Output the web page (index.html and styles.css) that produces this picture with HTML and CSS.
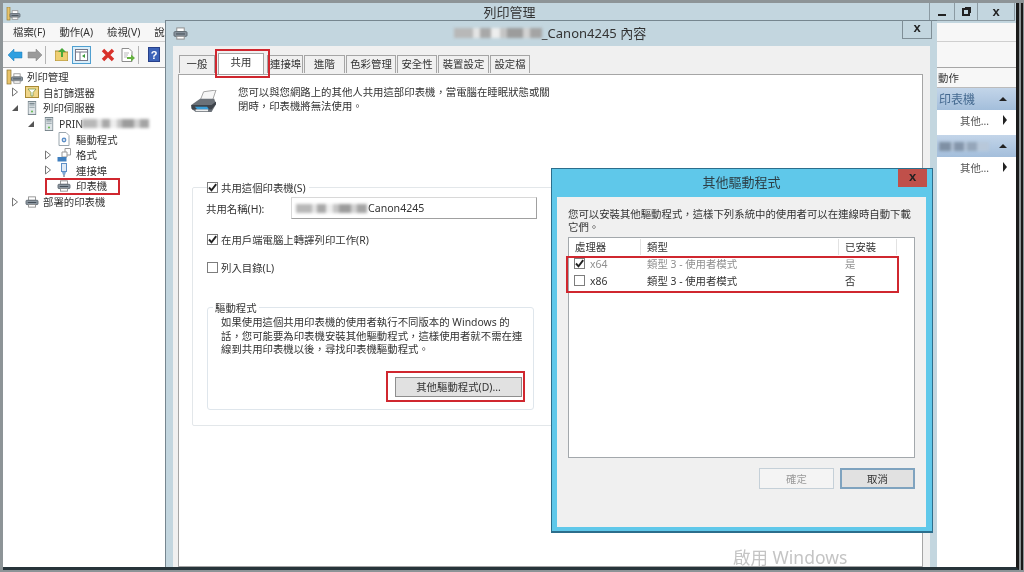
FILE: index.html
```html
<!DOCTYPE html>
<html lang="zh-Hant">
<head>
<meta charset="utf-8">
<title>列印管理</title>
<link rel="stylesheet" href="styles.css">
</head>
<body>
<svg class="defs" width="0" height="0" aria-hidden="true">
  <defs>
    <symbol id="printer" viewBox="0 0 16 14">
      <rect x="4" y="1" width="8" height="4" fill="#fff" stroke="#8a8a8a"/>
      <rect x="1" y="5" width="14" height="5" rx="1" fill="#8d98a2" stroke="#59636c"/>
      <rect x="3" y="7" width="10" height="1" fill="#39424a"/>
      <rect x="4" y="10" width="8" height="3" fill="#fff" stroke="#8a8a8a"/>
    </symbol>
    <symbol id="server" viewBox="0 0 10 16">
      <rect x=".5" y=".5" width="9" height="15" fill="#dfe5e8" stroke="#6d7b82"/>
      <rect x="2" y="2" width="6" height="2" fill="#7d8b92"/>
      <rect x="2" y="5" width="6" height="1" fill="#9aa7ad"/>
      <rect x="2" y="7" width="6" height="1" fill="#9aa7ad"/>
      <circle cx="5" cy="12" r="1.2" fill="#66bb55"/>
    </symbol>
    <symbol id="arrow-open" viewBox="0 0 8 8"><path d="M7 1V7H1Z" fill="#555"/></symbol>
    <symbol id="arrow-closed" viewBox="0 0 8 10"><path d="M1.5 1L6.5 5L1.5 9Z" fill="#fff" stroke="#777"/></symbol>
    <symbol id="check" viewBox="0 0 11 11"><path d="M2 5.500L4.500 8.300L9.200 2.200" fill="none" stroke="#222" stroke-width="1.9"/></symbol>
  </defs>
</svg>

<div class="desktop">
  <div class="main">
    <div class="main-title">
      <svg class="main-icon" width="15" height="14" viewBox="0 0 15 14"><rect x="1" y="0" width="3" height="13" fill="#e9c46a" stroke="#8a7330" stroke-width=".6"/><use href="#printer" x="3" y="3" width="12" height="10"/></svg>
      <span>列印管理</span>
      <div class="win-btns">
        <span class="win-btn min"><i></i></span>
        <span class="win-btn restore"><i></i></span>
        <span class="win-btn close">x</span>
      </div>
    </div>
    <div class="menubar">
      <span>檔案(F)</span><span>動作(A)</span><span>檢視(V)</span><span>說明(H)</span>
    </div>
    <div class="toolbar">
      <svg class="tool" width="15" height="12" viewBox="0 0 15 12"><path d="M0 6L6 0V3H14V9H6V12Z" fill="#2f9fe0" stroke="#1f78b4" stroke-width=".5"/></svg>
      <svg class="tool" width="15" height="12" viewBox="0 0 15 12"><path d="M15 6L9 0V3H1V9H9V12Z" fill="#9a9a9a" stroke="#808080" stroke-width=".5"/></svg>
      <i class="tool-sep"></i>
      <svg class="tool t-up" width="13" height="13" viewBox="0 0 13 13"><path d="M0 3H5L6 4H13V13H0Z" fill="#efcf72" stroke="#a98a35"/><path d="M6 9V4H3L7 0L11 4H8V9Z" fill="#4aa83a"/></svg>
      <svg class="tool t-pane" width="19" height="18" viewBox="0 0 19 18"><rect x=".5" y=".5" width="18" height="17" fill="#d9eefa" stroke="#4f9fd0"/><rect x="3.500" y="3.500" width="12" height="11" fill="#fff" stroke="#778"/><path d="M3 6H16" stroke="#778"/><path d="M8 6V15" stroke="#778"/><path d="M10 10L13 8V12Z" fill="#3a9a3a"/></svg>
      <svg class="tool t-x" width="14" height="14" viewBox="0 0 14 14"><path d="M2 2L12 12M12 2L2 12" stroke="#d8312a" stroke-width="3.400"/></svg>
      <svg class="tool t-exp" width="14" height="14" viewBox="0 0 14 14"><path d="M1 .5H8L11 3.500V13.500H1Z" fill="#fff" stroke="#8d8d8d"/><path d="M3 5H8M3 7H7M3 9H6" stroke="#b9b9b9"/><path d="M6 9H10V6.500L14 10L10 13.500V11H6Z" fill="#64b13f"/></svg>
      <i class="tool-sep"></i>
      <svg class="tool t-help" width="12" height="15" viewBox="0 0 12 15"><rect x=".5" y=".5" width="11" height="14" fill="#3d63b8" stroke="#27408a"/><text x="6" y="12" font-size="11" font-weight="700" text-anchor="middle" fill="#fff" font-family="Liberation Sans">?</text></svg>
    </div>
    <div class="workspace">
      <nav class="tree">
        <div class="node lv0">
          <svg class="n-icon wide" width="18" height="16" viewBox="0 0 18 16"><rect x="1" y="1" width="4" height="14" fill="#e9c46a" stroke="#8a7330" stroke-width=".7"/><use href="#printer" x="4" y="4" width="14" height="11"/></svg>
          <span>列印管理</span>
        </div>
        <div class="node lv1">
          <svg class="arrow" width="8" height="10"><use href="#arrow-closed"/></svg>
          <svg class="n-icon" width="14" height="12" viewBox="0 0 14 12"><rect x=".5" y=".5" width="13" height="11" fill="#f0d68a" stroke="#a98a35"/><path d="M3 3H11L8 6.500V10H6V6.500Z" fill="#fff" stroke="#6f8f3a" stroke-width=".7"/></svg>
          <span>自訂篩選器</span>
        </div>
        <div class="node lv1">
          <svg class="arrow" width="8" height="8"><use href="#arrow-open"/></svg>
          <svg class="n-icon" width="14" height="14" viewBox="-2 0 14 16"><use href="#server" width="10" height="16"/></svg>
          <span>列印伺服器</span>
        </div>
        <div class="node lv2">
          <svg class="arrow" width="8" height="8"><use href="#arrow-open"/></svg>
          <svg class="n-icon" width="14" height="14" viewBox="-2 0 14 16"><use href="#server" width="10" height="16"/></svg>
          <span>PRIN</span><span class="smudge s-tree"></span>
        </div>
        <div class="node lv3 noarrow">
          <svg class="n-icon" width="14" height="14" viewBox="0 0 14 14"><path d="M2 .5H9L12 3.500V13.500H2Z" fill="#fff" stroke="#9aa6ae"/><circle cx="7" cy="8" r="2.400" fill="#5d8fc7"/><circle cx="7" cy="8" r=".9" fill="#fff"/></svg>
          <span>驅動程式</span>
        </div>
        <div class="node lv3">
          <svg class="arrow" width="8" height="10"><use href="#arrow-closed"/></svg>
          <svg class="n-icon" width="14" height="14" viewBox="0 0 14 14"><path d="M8 .5H13.500V7H8Z" fill="#fff" stroke="#999"/><path d="M5 4H10V9H5Z" fill="#fff" stroke="#999"/><path d="M.5 9H9.500V13.500H.5Z" fill="#3f7fbf"/></svg>
          <span>格式</span>
        </div>
        <div class="node lv3">
          <svg class="arrow" width="8" height="10"><use href="#arrow-closed"/></svg>
          <svg class="n-icon" width="14" height="14" viewBox="0 0 14 14"><rect x="4.500" y=".5" width="5" height="8" fill="#dfeaf6" stroke="#5d8fc7"/><path d="M5 9H9L8 12H6Z" fill="#7fa8d4"/><path d="M7 12V14" stroke="#556"/></svg>
          <span>連接埠</span>
        </div>
        <div class="node lv3 noarrow">
          <svg class="n-icon" width="14" height="14"><use href="#printer" width="14" height="12" y="1"/></svg>
          <span>印表機</span>
        </div>
        <div class="node lv1">
          <svg class="arrow" width="8" height="10"><use href="#arrow-closed"/></svg>
          <svg class="n-icon" width="14" height="14"><use href="#printer" width="14" height="12" y="1"/></svg>
          <span>部署的印表機</span>
        </div>
      </nav>
      <div class="center"></div>
      <aside class="actions">
        <div class="act-head">動作</div>
        <div class="act-group"><span>印表機</span><b class="up"></b></div>
        <div class="act-item"><span>其他...</span><b class="right"></b></div>
        <div class="act-group"><span class="smudge s-act"></span><b class="up"></b></div>
        <div class="act-item"><span>其他...</span><b class="right"></b></div>
      </aside>
    </div>
  </div>

  <section class="props">
    <header class="props-title">
      <svg class="props-icon" width="15" height="13"><use href="#printer" width="15" height="13"/></svg>
      <span class="smudge s-title"></span><span>_Canon4245 內容</span>
      <span class="props-close">x</span>
    </header>
    <div class="props-client">
      <div class="tabs">
        <span class="tab t1">一般</span>
        <span class="tab t2 active">共用</span>
        <span class="tab t3">連接埠</span>
        <span class="tab t4">進階</span>
        <span class="tab t5">色彩管理</span>
        <span class="tab t6">安全性</span>
        <span class="tab t7">裝置設定</span>
        <span class="tab t8">設定檔</span>
      </div>
      <div class="panel">
        <div class="intro">
          <svg class="intro-icon" width="29" height="23" viewBox="0 0 32 26"><path d="M11 12L15 2L29 0L25 12Z" fill="#f6f6f6" stroke="#9a9a9a"/><path d="M1 17L11 10L27 10L29 16L24 25L6 25L1 21Z" fill="#6b7178"/><path d="M1 17L24 17L29 13L29 16L24 22L2 22Z" fill="#3e444b"/><path d="M5 19L19 19L21 22L8 22Z" fill="#3a9ed8"/><path d="M6 22H20V24H6Z" fill="#eee"/></svg>
          <p>您可以與您網路上的其他人共用這部印表機，當電腦在睡眠狀態或關<br>閉時，印表機將無法使用。</p>
        </div>
        <fieldset class="share">
          <legend class="check-row"><span class="cb on"><svg width="11" height="11"><use href="#check"/></svg></span>共用這個印表機(S)</legend>
          <div class="name-row">
            <label>共用名稱(H):</label>
            <div class="textbox"><span class="smudge s-input"></span>Canon4245</div>
          </div>
          <div class="check-row r2"><span class="cb on"><svg width="11" height="11"><use href="#check"/></svg></span>在用戶端電腦上轉譯列印工作(R)</div>
          <div class="check-row r3"><span class="cb"></span>列入目錄(L)</div>
          <fieldset class="drivers">
            <legend>驅動程式</legend>
            <p>如果使用這個共用印表機的使用者執行不同版本的 Windows 的<br>話，您可能要為印表機安裝其他驅動程式，這樣使用者就不需在連<br>線到共用印表機以後，尋找印表機驅動程式。</p>
            <div class="drv-actions"><button class="btn drv-btn" type="button">其他驅動程式(D)...</button></div>
          </fieldset>
        </fieldset>
        <div class="watermark">啟用 Windows</div>
      </div>
    </div>
  </section>

  <section class="extra">
    <header class="extra-title">其他驅動程式<span class="extra-close">x</span></header>
    <div class="extra-client">
      <p>您可以安裝其他驅動程式，這樣下列系統中的使用者可以在連線時自動下載<br>它們。</p>
      <div class="list">
        <div class="list-row list-head"><span>處理器</span><span>類型</span><span>已安裝</span><span></span></div>
        <div class="list-row muted"><span class="cell-cb"><span class="cb on"><svg width="11" height="11"><use href="#check"/></svg></span>x64</span><span>類型 3 - 使用者模式</span><span>是</span></div>
        <div class="list-row"><span class="cell-cb"><span class="cb"></span>x86</span><span>類型 3 - 使用者模式</span><span>否</span></div>
      </div>
      <div class="extra-actions">
        <button class="btn disabled" type="button">確定</button>
        <button class="btn default" type="button">取消</button>
      </div>
    </div>
  </section>

  <i class="mark m-tab"></i>
  <i class="mark m-tree"></i>
  <i class="mark m-btn"></i>
  <i class="mark m-list"></i>
</div>
</body>
</html>
```

FILE: styles.css
```css
* { box-sizing: border-box; }
html, body { margin: 0; padding: 0; background: #8d9497; }
.defs { position: absolute; }
p { margin: 0; }

.desktop {
  position: relative;
  width: 1024px;
  height: 572px;
  overflow: hidden;
  background: #8d9497;
  font-family: "Noto Sans", "Noto Sans CJK TC", sans-serif;
  font-size: 10.4px;
  color: #333;
  filter: blur(0.4px);
}
.desktop::after {
  content: "";
  position: absolute;
  right: 1px;
  top: 3px;
  width: 2px;
  height: 567px;
  background: #1a1a1a;
}

/* main window */
.main {
  position: absolute;
  left: 3px;
  top: 3px;
  width: 1016px;
  height: 567px;
  display: flex;
  flex-direction: column;
  background: #fff;
  border-right: 3px solid #1a1a1a;
  border-bottom: 3px solid #27343a;
}
.main-title {
  position: relative;
  flex: 0 0 20px;
  background: #c3d6df;
  text-align: center;
  font-size: 13px;
  line-height: 19px;
  color: #333;
}
.main-icon { position: absolute; left: 3px; top: 4px; }
.win-btns { position: absolute; right: 1px; top: 0; display: flex; height: 18px; }
.win-btn {
  display: flex;
  align-items: center;
  justify-content: center;
  height: 18px;
  border-left: 1px solid #8b9aa2;
  border-bottom: 1px solid #8b9aa2;
  font: 700 13px/15px "Liberation Sans", sans-serif;
  color: #222;
}
.win-btn.min { width: 25px; }
.win-btn.min i { width: 8px; height: 2px; margin-top: 6px; background: #222; }
.win-btn.restore { width: 23px; }
.win-btn.restore i { width: 8px; height: 8px; border: 2px solid #222; box-shadow: 2px -2px 0 -1px #222; }
.win-btn.close { width: 38px; border-right: 1px solid #8b9aa2; }

.menubar {
  flex: 0 0 19px;
  display: flex;
  gap: 14px;
  padding: 0 0 2px 10px;
  align-items: center;
  background: #f7f7f7;
  border-bottom: 1px solid #cfcfcf;
  white-space: nowrap;
}
.toolbar {
  flex: 0 0 26px;
  display: flex;
  align-items: center;
  padding-left: 5px;
  background: #f7f7f7;
  border-bottom: 1px solid #a7a7a7;
}
.tool { flex: none; margin-right: 4px; }
.tool-sep { flex: none; width: 1px; height: 18px; background: #b5b5b5; margin: 0 9px 0 -1px; }
.t-up { margin-right: 4px; }
.t-pane { margin-right: 10px; }
.t-x { margin-right: 6px; }

.workspace { flex: 1; display: flex; min-height: 0; }
.tree { flex: 0 0 162px; padding-top: 1px; background: #fff; }
.node {
  display: flex;
  align-items: center;
  height: 15.6px;
  white-space: nowrap;
  color: #333;
}
.node .arrow { flex: none; width: 8px; margin-right: 5px; }
.n-icon { flex: none; margin-right: 4px; }
.lv0 { padding-left: 3px; }
.lv0 .n-icon { margin-right: 3px; }
.lv1 { padding-left: 8px; }
.lv1 .n-icon { margin-left: 1px; }
.lv2 { padding-left: 24px; }
.lv2 .n-icon { margin-left: 2px; margin-right: 3px; }
.lv3 { padding-left: 41px; }
.lv3 .n-icon { margin-right: 5px; }
.lv3.noarrow { padding-left: 54px; }
.center { flex: 1; background: #fff; }

.actions { flex: 0 0 79px; background: #fff; color: #333; }
.act-head {
  height: 20px;
  line-height: 20px;
  padding-left: 1px;
  background: #f7f7f7;
  border-bottom: 1px solid #bbb;
}
.act-group {
  display: flex;
  justify-content: space-between;
  align-items: center;
  height: 22px;
  padding: 0 6px 0 2px;
  background: linear-gradient(#c3d5e9, #a3bedb);
  font-size: 12px;
  color: #456a90;
}
.act-item {
  display: flex;
  justify-content: space-between;
  align-items: center;
  height: 25px;
  padding: 0 6px 5px 23px;
  color: #555;
}
.up { width: 0; height: 0; border: 4px solid transparent; border-top: 0; border-bottom: 4px solid #222; margin-right: 3px; }
.right { width: 0; height: 0; border: 5px solid transparent; border-right: 0; border-left: 4px solid #222; margin-right: 3px; }

/* blurred-out names */
.smudge {
  display: inline-block;
  height: 9px;
  filter: blur(1.6px);
  background: linear-gradient(90deg, #b8b8b8 0 22%, #e4e4e4 22% 30%, #a8a8a8 30% 42%, #eee 42% 52%, #c4c4c4 52% 60%, #9c9c9c 60% 78%, #d2d2d2 78% 86%, #a4a4a4 86% 100%);
}
.s-tree { width: 67px; margin-left: -1px; }
.s-act { width: 50px; background: linear-gradient(90deg, #7f90a4 0 24%, #b5c5d8 24% 30%, #8495aa 30% 50%, #b5c5d8 50% 56%, #95a6ba 56% 76%, #b8c8da 76% 100%); }
.s-title { width: 88px; height: 10px; }
.s-input { width: 71px; margin-right: 1px; }

/* properties window */
.props {
  position: absolute;
  left: 165px;
  top: 20px;
  width: 772px;
  height: 547px;
  display: flex;
  flex-direction: column;
  padding: 0 7px;
  background: #c3d6df;
  border-top: 1px solid #76868f;
  border-left: 1px solid #76868f;
}
.props-title {
  position: relative;
  flex: 0 0 25px;
  display: flex;
  align-items: center;
  justify-content: center;
  font-size: 13px;
  color: #333;
  padding: 0 3px 2px 0;
}
.props-icon { position: absolute; left: 0; top: 6px; }
.props-close {
  position: absolute;
  right: -2px;
  top: -1px;
  width: 30px;
  height: 19px;
  border: 1px solid #7f8e96;
  border-top: 0;
  text-align: center;
  font: 700 13px/15px "Liberation Sans", sans-serif;
  color: #222;
}
.props-client {
  flex: 1;
  min-height: 0;
  display: flex;
  flex-direction: column;
  background: #f0f0f0;
  padding: 9px 7px 0 5px;
}
.tabs { flex: 0 0 17px; display: flex; position: relative; z-index: 1; padding-left: 1px; }
.tab {
  height: 18px;
  margin-right: 1px;
  background: #f0f0f0;
  border: 1px solid #a5a5a5;
  border-bottom: 0;
  text-align: center;
  line-height: 17px;
  white-space: nowrap;
}
.t1 { width: 36px; margin-right: 0; }
.t2 { width: 46px; height: 21px; margin: -2px 3px 0 3px; background: #fff; line-height: 16px; }
.t3 { width: 36px; text-align: left; padding-left: 2px; overflow: hidden; }
.t4 { width: 41px; }
.t5 { width: 50px; }
.t6 { width: 40px; }
.t7 { width: 51px; }
.t8 { width: 40px; }
.panel {
  position: relative;
  flex: 1;
  min-height: 0;
  background: #fff;
  border: 1px solid #a5a5a5;
  padding: 13px 0 0 11px;
}
.intro { display: flex; height: 92px; }
.intro-icon { flex: none; margin: 2px 19px 0 0; }
.intro p { line-height: 13.5px; margin-top: -2px; white-space: nowrap; }

.share {
  margin: 0 0 0 2px;
  width: 362px;
  min-inline-size: 0;
  height: 246px;
  padding: 0 0 0 15px;
  border: 1px solid #e3e7ea;
  border-radius: 2px;
}
.share > legend { padding: 0 3px 0 0; margin-left: -1px; }
.check-row { display: flex; align-items: center; white-space: nowrap; }
.cb {
  flex: none;
  display: inline-block;
  width: 11px;
  height: 11px;
  margin-right: 3px;
  background: #fff;
  border: 1px solid #7d7d7d;
  position: relative;
}
.cb svg { position: absolute; left: -1px; top: -1px; }
.name-row { display: flex; align-items: center; margin: 2px 0 0 -2px; }
.name-row label { flex: 0 0 85px; }
.textbox {
  flex: none;
  display: flex;
  align-items: center;
  width: 246px;
  height: 22px;
  padding-left: 4px;
  background: #fff;
  border: 1px solid #a0a0a0;
  border-left-color: #d8d8d8;
  border-top-color: #d8d8d8;
  color: #333;
  font-size: 10.6px;
}
.r2 { margin-top: 13px; margin-left: -1px; }
.r3 { margin-top: 13px; margin-left: -1px; }
.drivers {
  margin: 25px 0 0 -1px;
  width: 327px;
  min-inline-size: 0;
  height: 110px;
  padding: 0 0 0 13px;
  border: 1px solid #dfe6ec;
  border-radius: 3px;
}
.drivers legend { padding: 0 2px; margin-left: -8px; }
.drivers p { line-height: 13.5px; white-space: nowrap; margin-top: 1px; }
.drv-actions { display: flex; justify-content: flex-end; padding: 20px 11px 0 0; }
.btn {
  font: inherit;
  color: #333;
  padding: 0;
  background: #e1e1e1;
  border: 1px solid #8e8e8e;
}
.drv-btn { width: 127px; height: 20px; }
.watermark {
  position: absolute;
  left: 554px;
  top: 470px;
  font-size: 17.5px;
  line-height: 24px;
  color: #c4c4c4;
  white-space: nowrap;
}

/* additional drivers dialog */
.extra {
  position: absolute;
  left: 551px;
  top: 168px;
  width: 382px;
  height: 365px;
  display: flex;
  flex-direction: column;
  padding: 0 6px 4px 5px;
  background: #5fc8ea;
  border: 1px solid #2c6e8c;
  border-bottom-width: 2px;
  z-index: 2;
}
.extra-title {
  position: relative;
  flex: 0 0 28px;
  text-align: center;
  font-size: 13px;
  line-height: 26px;
  color: #2c3e46;
}
.extra-close {
  position: absolute;
  right: -1px;
  top: 0;
  width: 29px;
  height: 18px;
  background: #c0504a;
  font: 700 13px/15px "Liberation Sans", sans-serif;
  color: #222;
}
.extra-client {
  flex: 1;
  min-height: 0;
  display: flex;
  flex-direction: column;
  background: #f0f0f0;
  padding: 11px 11px 0 11px;
}
.extra-client p { line-height: 13px; white-space: nowrap; }
.list {
  flex: 0 0 221px;
  margin-top: 3px;
  background: #fff;
  border: 1px solid #a3a8ac;
}
.list-row {
  display: grid;
  grid-template-columns: 72px 198px 58px 1fr;
  height: 17px;
  align-items: center;
  color: #333;
}
.list-row > span { padding-left: 6px; white-space: nowrap; }
.list-head > span { height: 16px; line-height: 16px; border-right: 1px solid #e2e2e2; }
.list-head > span:last-child { border-right: 0; }
.cell-cb { display: flex; align-items: center; }
.list-row > .cell-cb { padding-left: 5px; }
.cell-cb .cb { margin-right: 5px; }
.muted { color: #8f8f8f; }
.extra-actions { display: flex; justify-content: flex-end; gap: 6px; padding-top: 10px; }
.extra-actions .btn { width: 75px; height: 21px; }
.btn.disabled { background: #f4f4f4; border-color: #c5d0d8; color: #999; }
.btn.default { background: #e1e1e1; border: 2px solid #7fa3bf; }

/* red annotation rectangles */
.mark { position: absolute; z-index: 3; border: 2px solid #d0272f; }
.m-tab { left: 215px; top: 49px; width: 55px; height: 29px; }
.m-tree { left: 45px; top: 178px; width: 75px; height: 17px; }
.m-btn { left: 386px; top: 371px; width: 139px; height: 31px; }
.m-list { left: 566px; top: 256px; width: 333px; height: 37px; }
```
